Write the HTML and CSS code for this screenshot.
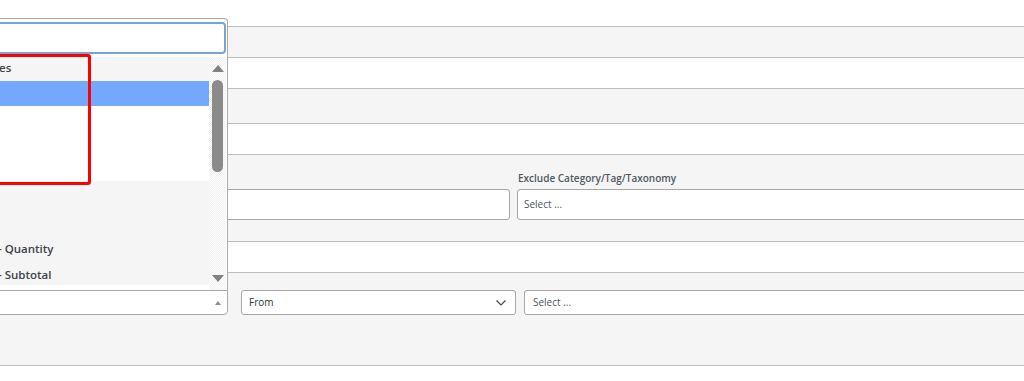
FILE: index.html
```html
<!DOCTYPE html>
<html lang="en">

<head>
    <meta charset="UTF-8">
    <meta name="viewport" content="width=device-width, initial-scale=1.0">
    <title>Rule Conditions</title>
    <link rel="stylesheet" href="styles.css">
</head>

<body>

    <!-- Form rows (view is scrolled a little to the right) -->
    <div class="page">
        <div class="row row-top"></div>
        <div class="row gray h30"></div>
        <div class="row h30"></div>
        <div class="row gray h34"></div>
        <div class="row h30"></div>

        <!-- Category filters -->
        <div class="row gray row-fields">
            <div class="field">
                <label></label>
                <div class="input"></div>
            </div>
            <div class="field">
                <label>Exclude Category/Tag/Taxonomy</label>
                <div class="input">Select ...</div>
            </div>
        </div>

        <div class="row h30"></div>

        <!-- Condition selects -->
        <div class="row gray row-selects">
            <div class="select2-box"><span class="arrow-up"></span></div>
            <div class="select">
                <span>From</span>
                <svg width="10" height="6" viewBox="0 0 10 6"><polyline points="0.5,0.5 5,5 9.5,0.5" fill="none" stroke="#444" stroke-width="1.2"/></svg>
            </div>
            <div class="select-multi">Select ...</div>
        </div>

        <div class="row"></div>
    </div>

    <!-- Open dropdown of the condition select (opens above) -->
    <div class="dropdown">
        <div class="search"></div>
        <div class="results">
            <ul class="options">
                <li class="group">es</li>
                <li class="option active"></li>
                <li class="option"></li>
                <li class="option"></li>
                <li class="option"></li>
                <li class="group tall"></li>
                <li class="group tall"></li>
                <li class="group tall">- Quantity</li>
                <li class="group tall">- Subtotal</li>
            </ul>
            <div class="scrollbar">
                <span class="sb-up"></span>
                <span class="sb-thumb"></span>
                <span class="sb-down"></span>
            </div>
        </div>
    </div>

    <!-- Red annotation box -->
    <div class="highlight"></div>

</body>

</html>
```

FILE: styles.css
```css
body, html {
    margin: 0;
    padding: 0;
    height: 100%;
    overflow: hidden;
}

body {
    font-family: 'Open Sans', 'Noto Sans', sans-serif;
    background-color: #fff;
    position: relative;
}

/* Rows of the settings table */
.page {
    width: 1060px;
    margin-left: -12px;
}

.row {
    border-top: 1px solid #bdbdbd;
    background-color: #fff;
}

.row-top {
    height: 26px;
    border-top: none;
}

.gray {
    background-color: #f5f5f5;
}

.h30 {
    height: 30px;
}

.h34 {
    height: 34px;
}

/* Category fields */
.row-fields {
    height: 70px;
    padding-top: 16px;
    display: grid;
    grid-template-columns: 522px 522px;
    column-gap: 7px;
}

.field label {
    display: block;
    height: 14px;
    font-size: 10px;
    line-height: 14px;
    font-weight: 600;
    color: #50575e;
    margin-bottom: 4px;
    padding-left: 1px;
}

.input {
    box-sizing: border-box;
    height: 31px;
    border: 1px solid #a7a7a7;
    border-radius: 3px;
    background-color: #fff;
    font-size: 10px;
    line-height: 29px;
    color: #50575e;
    padding-left: 6px;
}

/* Condition selects */
.row-selects {
    height: 75px;
    padding-top: 17px;
    display: flex;
    gap: 8px;
}

.select2-box,
.select,
.select-multi {
    box-sizing: border-box;
    height: 25px;
    border: 1px solid #a7a7a7;
    border-radius: 3px;
    background-color: #fff;
    font-size: 10px;
    line-height: 23px;
}

.select2-box {
    width: 240px;
    margin-right: 5px;
    border-radius: 0 0 4px 4px;
    display: flex;
    justify-content: flex-end;
    align-items: center;
    padding-right: 6px;
}

.arrow-up {
    width: 0;
    height: 0;
    border-left: 3px solid transparent;
    border-right: 3px solid transparent;
    border-bottom: 4px solid #8c8c8c;
    margin-top: 1px;
}

.select {
    width: 275px;
    display: flex;
    justify-content: space-between;
    align-items: center;
    padding: 0 9px 0 7px;
    color: #2c3338;
}

.select-multi {
    width: 520px;
    padding-left: 8px;
    color: #50575e;
}

/* Dropdown panel */
.dropdown {
    position: absolute;
    top: 18px;
    left: -20px;
    width: 248px;
    height: 272px;
    box-sizing: border-box;
    border: 1px solid #aaa;
    border-bottom: none;
    border-radius: 0 4px 0 0;
    background-color: #fff;
    padding: 3px 1px 0 4px;
    z-index: 5;
}

.search {
    box-sizing: border-box;
    height: 32px;
    border: 2px solid #7ea3cf;
    border-radius: 4px;
    margin-bottom: 3px;
}

.results {
    display: flex;
    height: 233px;
    margin-left: -4px;
}

.options {
    flex: 1;
    list-style: none;
    margin: 0;
    padding: 0;
    overflow: hidden;
}

.options li {
    height: 25px;
    padding-left: 18px;
    font-size: 11.5px;
    font-weight: 600;
    color: #2c3338;
    line-height: 22px;
    white-space: nowrap;
}

.options .group {
    background-color: #f5f5f5;
    height: 24px;
    color: #3c434a;
}

.options .group.tall {
    height: 26px;
    line-height: 32px;
    padding-left: 17px;
}

.options .active {
    background-color: #72a8fd;
}

/* Scrollbar drawn by hand */
.scrollbar {
    width: 17px;
    background: repeating-conic-gradient(#efefef 0 25%, #fff 0 50%) 0 0 / 2px 2px;
    display: flex;
    flex-direction: column;
    align-items: center;
}

.sb-up,
.sb-down {
    width: 0;
    height: 0;
    border-left: 6px solid transparent;
    border-right: 6px solid transparent;
}

.sb-up {
    border-bottom: 7px solid #808080;
    margin-top: 8px;
}

.sb-thumb {
    width: 11px;
    height: 92px;
    margin-top: 8px;
    border-radius: 6px;
    background-color: #8a8a8a;
}

.sb-down {
    border-top: 7px solid #808080;
    margin-top: auto;
    margin-bottom: 8px;
}

/* Annotation */
.highlight {
    position: absolute;
    top: 54px;
    left: -10px;
    width: 101px;
    height: 131px;
    box-sizing: border-box;
    border: 3px solid #ff0000;
    border-radius: 3px;
    z-index: 6;
}
```
